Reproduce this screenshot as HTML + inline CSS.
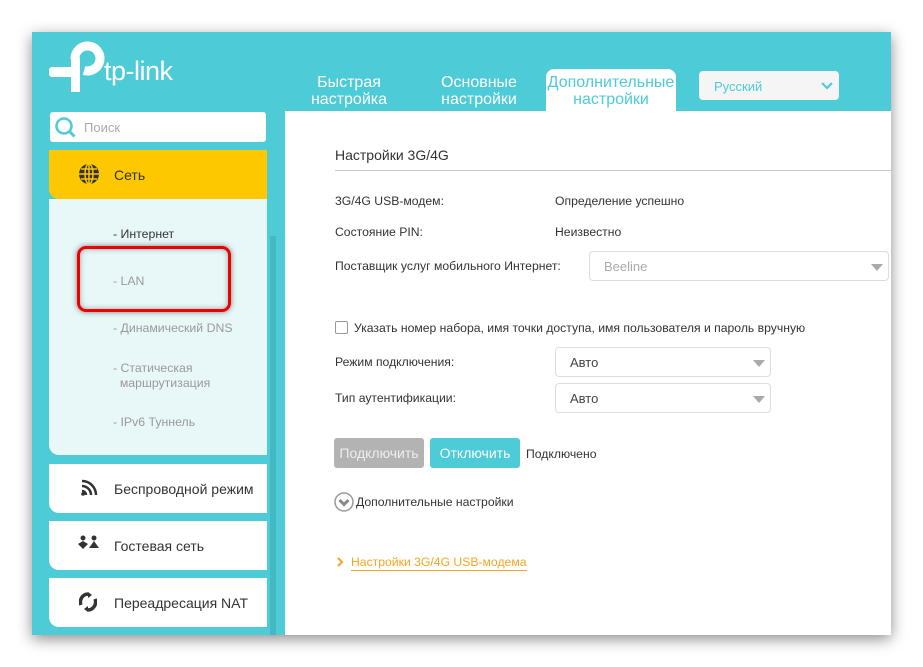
<!DOCTYPE html>
<html><head><meta charset="utf-8"><style>
body{margin:0;width:923px;height:667px;background:#fff;font-family:"Liberation Sans",sans-serif;position:relative;overflow:hidden}
.a{position:absolute}
#win{left:32px;top:32px;width:859px;height:603px;background:#4dcbd6;box-shadow:0 4px 14px rgba(0,0,0,.45)}
.tab{color:#fff;font-size:16px;text-align:center;line-height:17px}
.lbl{font-size:12.2px;color:#333}
.sel{border:1px solid #ddd;border-radius:4px;background:#fff;font-size:13px;color:#444}
.tri{position:absolute;right:5px;top:12px;width:0;height:0;border-left:6px solid transparent;border-right:6px solid transparent;border-top:7px solid #aaa}
.tile{left:49px;width:218px;height:49px;background:#fff;border-bottom-left-radius:10px}
.tile span{position:absolute;left:65px;top:17px;font-size:14px;color:#333}
.sub{font-size:12.3px;color:#999;left:113px}
</style></head><body>
<div id="win" class="a"></div>
<!-- logo -->
<svg class="a" style="left:44px;top:38px" width="140" height="60" viewBox="0 0 140 60">
<path d="M31 21 A 12.5 12.5 0 1 1 40 32.5" fill="none" stroke="#fff" stroke-width="9"/>
<rect x="27" y="20" width="9" height="34" fill="#fff"/>
<rect x="5" y="29" width="31" height="10" rx="3" fill="#fff"/>
<text x="60" y="42" font-family="Liberation Sans" font-size="27" letter-spacing="-0.5" fill="#fff">tp-link</text>
</svg>
<div class="a tab" style="left:300px;top:74px;width:98px">Быстрая<br>настройка</div>
<div class="a tab" style="left:430px;top:74px;width:98px">Основные<br>настройки</div>
<div class="a" style="left:546px;top:69px;width:130px;height:45px;background:#fff;border-radius:8px 8px 0 0"></div>
<div class="a tab" style="left:546px;top:74px;width:130px;color:#4dcbd6">Дополнительные<br>настройки</div>
<div class="a" style="left:699px;top:71px;width:140px;height:29px;background:#f5f5f5;border-radius:4px"></div>
<div class="a" style="left:714px;top:79px;font-size:13px;color:#4dcbd6">Русский</div>
<svg class="a" style="left:821px;top:82px" width="12" height="8"><path d="M1 1l5 5 5-5" stroke="#4dcbd6" stroke-width="2.2" fill="none"/></svg>
<!-- content -->
<div class="a" style="left:285px;top:111px;width:606px;height:524px;background:#fff"></div>
<div class="a" style="left:335px;top:147px;font-size:14px;color:#333">Настройки 3G/4G</div>
<div class="a" style="left:335px;top:170px;width:556px;height:1px;background:#ccc"></div>
<div class="a lbl" style="left:335px;top:194px">3G/4G USB-модем:</div>
<div class="a lbl" style="left:555px;top:194px">Определение успешно</div>
<div class="a lbl" style="left:335px;top:225px">Состояние PIN:</div>
<div class="a lbl" style="left:555px;top:225px">Неизвестно</div>
<div class="a lbl" style="left:335px;top:259px">Поставщик услуг мобильного Интернет:</div>
<div class="a sel" style="left:589px;top:251px;width:298px;height:28px"><span class="a" style="left:14px;top:7px;color:#aaa">Beeline</span><div class="tri"></div></div>
<div class="a" style="left:335px;top:321px;width:11px;height:11px;border:1px solid #999;border-radius:2px"></div>
<div class="a lbl" style="left:354px;top:321px">Указать номер набора, имя точки доступа, имя пользователя и пароль вручную</div>
<div class="a lbl" style="left:335px;top:355px">Режим подключения:</div>
<div class="a sel" style="left:555px;top:347px;width:214px;height:28px"><span class="a" style="left:14px;top:7px">Авто</span><div class="tri"></div></div>
<div class="a lbl" style="left:335px;top:391px">Тип аутентификации:</div>
<div class="a sel" style="left:555px;top:383px;width:214px;height:28px"><span class="a" style="left:14px;top:7px">Авто</span><div class="tri"></div></div>
<div class="a" style="left:334px;top:438px;width:90px;height:30px;background:#b3b3b3;border-radius:3px;color:#eee;font-size:14px;text-align:center;line-height:30px">Подключить</div>
<div class="a" style="left:430px;top:438px;width:90px;height:30px;background:#4dcbd6;border-radius:3px;color:#fff;font-size:14px;text-align:center;line-height:30px">Отключить</div>
<div class="a lbl" style="left:526px;top:447px">Подключено</div>
<svg class="a" style="left:334px;top:492px" width="20" height="20"><circle cx="10" cy="10" r="9" fill="none" stroke="#999" stroke-width="1.5"/><path d="M5.5 8l4.5 4.5 4.5-4.5" stroke="#888" stroke-width="3" fill="none"/></svg>
<div class="a lbl" style="left:356px;top:495px">Дополнительные настройки</div>
<svg class="a" style="left:337px;top:557px" width="8" height="10"><path d="M1 1l4 4-4 4" stroke="#f5a623" stroke-width="2" fill="none"/></svg>
<div class="a lbl" style="left:351px;top:555px;color:#f5a623;border-bottom:1px solid #f5a623;padding-bottom:1px">Настройки 3G/4G USB-модема</div>
<!-- sidebar -->
<div class="a" style="left:50px;top:112px;width:216px;height:30px;background:#fff;border-radius:3px"></div>
<svg class="a" style="left:54px;top:116px" width="24" height="24"><circle cx="10" cy="10" r="7.5" fill="none" stroke="#4dcbd6" stroke-width="2.5"/><path d="M15.5 15.5l5 5" stroke="#4dcbd6" stroke-width="3"/></svg>
<div class="a" style="left:84px;top:120px;font-size:13px;color:#aaa">Поиск</div>
<div class="a" style="left:270px;top:236px;width:6px;height:399px;background:#44b9c3"></div>
<div class="a" style="left:49px;top:150px;width:218px;height:49px;background:#fdc800;border-bottom-left-radius:10px"></div>
<svg class="a" style="left:78px;top:163px" width="22" height="22"><circle cx="11" cy="11" r="10" fill="#333"/><g stroke="#fdc800" stroke-width="1.5" fill="none"><ellipse cx="11" cy="11" rx="4" ry="10"/><path d="M1 11h20M3 6h16M3 16h16M11 1v20"/></g></svg>
<div class="a" style="left:114px;top:167px;font-size:14px;color:#333">Сеть</div>
<div class="a" style="left:49px;top:199px;width:218px;height:256px;background:#e8f8f9;border-bottom-left-radius:10px"></div>
<div class="a sub" style="top:227px;color:#333">- Интернет</div>
<div class="a" style="left:77px;top:246px;width:148px;height:60px;border:3px solid #e00;border-radius:9px;box-shadow:0 0 6px rgba(0,0,0,.5),inset 0 0 6px rgba(0,0,0,.35)"></div>
<div class="a sub" style="top:274px">- LAN</div>
<div class="a sub" style="top:321px">- Динамический DNS</div>
<div class="a sub" style="top:361px;line-height:15px">- Статическая<br>&nbsp;&nbsp;маршрутизация</div>
<div class="a sub" style="top:415px">- IPv6 Туннель</div>
<div class="a tile" style="top:464px"><span>Беспроводной режим</span>
<svg class="a" style="left:31px;top:15px" width="18" height="18"><g fill="none" stroke="#333" stroke-width="2.5"><path d="M2 7a9 9 0 0 1 9 9M2 2a14 14 0 0 1 14 14M2 12a4 4 0 0 1 4 4"/></g><circle cx="3" cy="15" r="1.8" fill="#333"/></svg></div>
<div class="a tile" style="top:521px"><span>Гостевая сеть</span>
<svg class="a" style="left:29px;top:14px" width="22" height="16"><circle cx="5" cy="3" r="2.5" fill="#333"/><circle cx="16" cy="3" r="2.5" fill="#333"/><path d="M0 9l5-3 5 3-5 5z" fill="#333"/><path d="M11 13l5-7 5 7z" fill="#333"/></svg></div>
<div class="a tile" style="top:578px"><span>Переадресация NAT</span>
<svg class="a" style="left:30px;top:14px" width="18" height="20"><path d="M9 2a8 8 0 0 0-7 11M9 18a8 8 0 0 0 7-11" stroke="#333" stroke-width="3.5" fill="none"/><path d="M9 0l4 3-4 3zM9 14l-4 3 4 3z" fill="#333"/></svg></div>
</body></html>
